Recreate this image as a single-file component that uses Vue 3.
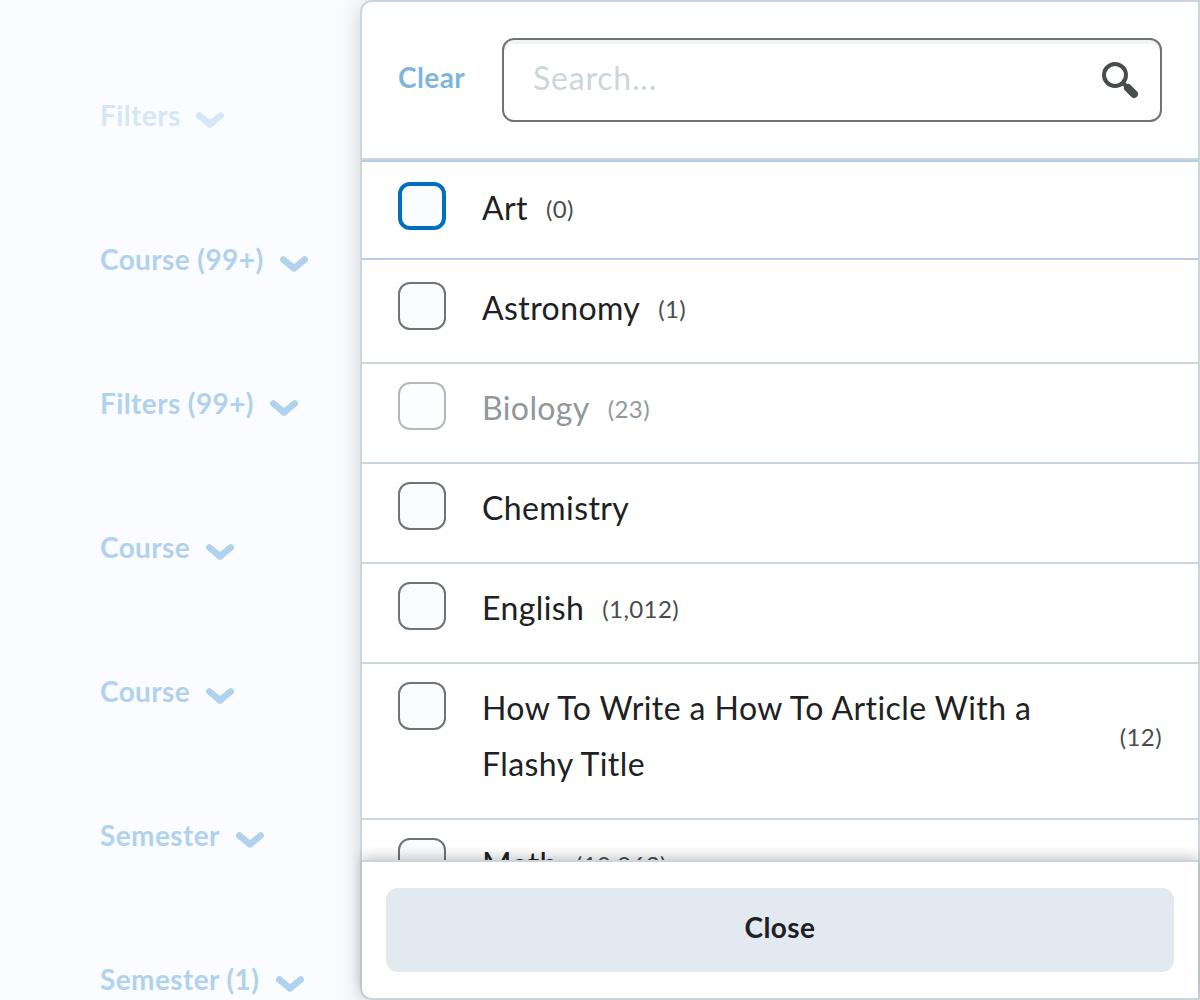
<script setup>
const filters = [
  { label: 'Filters', width: 80, disabled: true },
  { label: 'Course (99+)', width: 164 },
  { label: 'Filters (99+)', width: 154 },
  { label: 'Course', width: 90 },
  { label: 'Course', width: 90 },
  { label: 'Semester', width: 120 },
  { label: 'Semester (1)', width: 160 },
]
const items = [
  { label: 'Art', count: '0', state: 'focused' },
  { label: 'Astronomy', count: '1', state: 'after-focused' },
  { label: 'Biology', count: '23', state: 'disabled' },
  { label: 'Chemistry' },
  { label: 'English', count: '1,012' },
  { label: 'How To Write a How To Article With a Flashy Title', count: '12', state: 'wrapped' },
  { label: 'Math', count: '10,963' },
]
</script>

<template>
  <main class="page">
    <nav class="filters">
      <button v-for="(f, i) in filters" :key="i" class="filter" :class="{ disabled: f.disabled }">
        <span :style="{ width: f.width + 'px' }">{{ f.label }}</span>
        <svg width="28" height="18" viewBox="0 0 28 18"><path d="M3.3 4.5L14 13.4L24.7 4.5" /></svg>
      </button>
    </nav>
    <section class="panel">
      <header class="header">
        <button class="clear">Clear</button>
        <label class="search">
          <input type="text" placeholder="Search..." />
          <svg width="38" height="38" viewBox="0 0 38 38">
            <circle cx="14" cy="14" r="11" fill="none" stroke="#494c4e" stroke-width="4" />
            <path d="M21 21L27 27" stroke="#494c4e" stroke-width="4" />
            <path d="M27 27L33 33" stroke="#494c4e" stroke-width="8" stroke-linecap="round" />
          </svg>
        </label>
      </header>
      <ul class="list">
        <li v-for="item in items" :key="item.label" class="item" :class="item.state">
          <span class="box"></span>
          <span class="label">{{ item.label }}</span>
          <span v-if="item.count" class="count">({{ item.count }})</span>
        </li>
      </ul>
      <footer class="footer"><button class="close">Close</button></footer>
    </section>
  </main>
</template>

<style>
body { margin: 0; }
</style>
<style scoped>
* { box-sizing: border-box; }
button { border: 0; padding: 0; background: none; font: inherit; letter-spacing: inherit; }
.page { display: flex; width: 1200px; height: 1000px; overflow: hidden; background: #fbfcff; font-family: Lato, sans-serif; letter-spacing: 0.4px; color: #202122; }
.filters { width: 360px; padding: 80px 0 0 100px; flex: none; }
.filter { display: flex; align-items: center; gap: 16px; height: 72px; margin-bottom: 72px; font-size: 28px; font-weight: 700; color: #b0d2ec; white-space: nowrap; text-align: left; }
.filter span { padding-bottom: 2px; }
.filter.disabled { color: #d5e7f6; }
.filter svg { margin-top: 8px; fill: none; stroke: currentColor; stroke-width: 6.6; stroke-linecap: round; stroke-linejoin: round; }
.panel { display: flex; flex-direction: column; width: 840px; height: 1000px; border: 2px solid #cdd5dc; border-radius: 12px 0 0 12px; background: #fff; box-shadow: 0 4px 24px rgba(73, 76, 78, 0.25); }
.header { display: flex; align-items: center; height: 158px; flex: none; padding: 0 36px; border-bottom: 2px solid #cdd5dc; }
.clear { width: 104px; padding-bottom: 6px; text-align: left; font-size: 28px; font-weight: 700; color: #7fb5dd; }
.search { display: flex; align-items: center; flex: 1; height: 84px; padding: 0 21px 0 29px; border: 2px solid #6e7376; border-radius: 12px; box-shadow: inset 0 4px 0 #f1f2f3; }
.search input { flex: 1; min-width: 0; border: 0; padding: 0 0 6px; outline: 0; background: transparent; font: 400 32px Lato, sans-serif; letter-spacing: 0.8px; }
.search input::placeholder { color: #cdd5dc; }
.list { flex: 1; min-height: 0; overflow: hidden; margin: 0; padding: 0; list-style: none; }
.item { display: flex; align-items: flex-start; padding: 18px 36px 24px; border-top: 2px solid #cdd5dc; font-size: 32px; line-height: 56px; }
.item.focused { padding: 20px 36px; border-top: 2px solid #b8cce9; border-bottom: 2px solid #b8cce9; }
.item.after-focused { padding-top: 22px; border-top: 0; }
.box { flex: none; width: 48px; height: 48px; margin-right: 36px; border: 2px solid #6e7376; border-radius: 12px; background: #fbfcff; }
.focused .box { border: 4px solid #006fbf; }
.label { max-width: 610px; margin: -2px 0 2px; }
.count { align-self: center; margin: -1px 0 1px 18px; font-size: 24px; color: #494c4e; }
.wrapped .label { letter-spacing: 0.43px; }
.wrapped .count { margin-left: auto; }
.disabled .box { opacity: 0.5; }
.disabled .label, .disabled .count { color: #90989d; }
.footer { position: relative; flex: none; height: 138px; padding: 26px 24px; border-top: 2px solid #cdd5dc; border-radius: 0 0 0 10px; background: #fff; box-shadow: 0 -4px 12px rgba(0, 0, 0, 0.2); clip-path: inset(-20px -20px 0 -20px); }
.close { width: 100%; height: 84px; padding-bottom: 6px; border-radius: 12px; background: #e3e9f1; color: #202122; font-size: 28px; font-weight: 700; }
</style>
